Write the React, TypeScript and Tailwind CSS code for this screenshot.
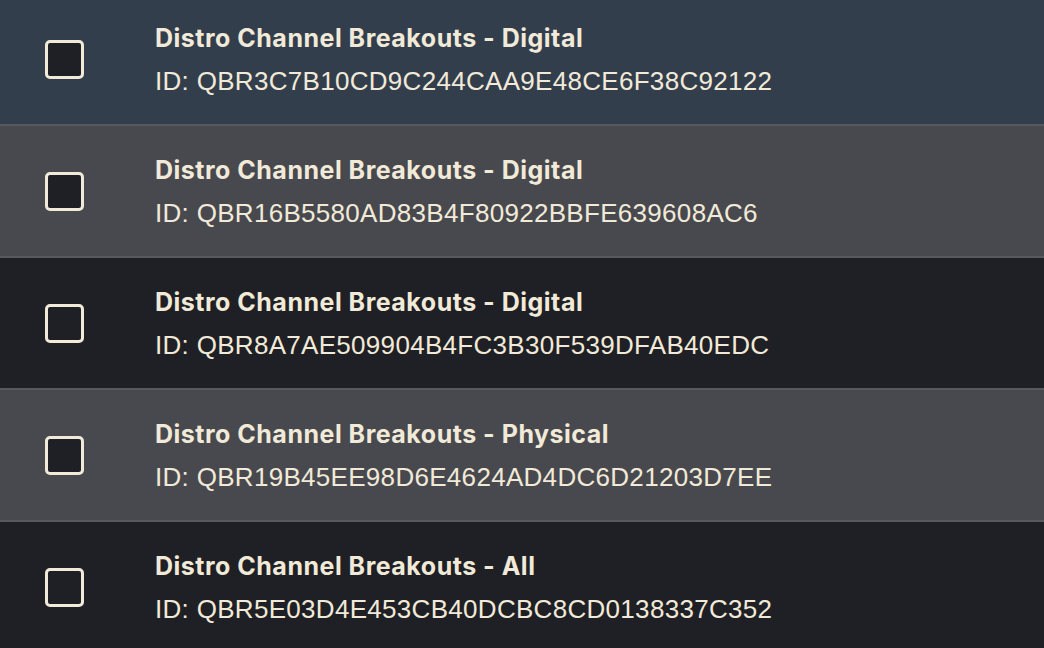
const rows = [
    { title: 'Distro Channel Breakouts - Digital', id: 'QBR3C7B10CD9C244CAA9E48CE6F38C92122', tone: 'selected' },
    { title: 'Distro Channel Breakouts - Digital', id: 'QBR16B5580AD83B4F80922BBFE639608AC6', tone: 'grey' },
    { title: 'Distro Channel Breakouts - Digital', id: 'QBR8A7AE509904B4FC3B30F539DFAB40EDC', tone: 'dark' },
    { title: 'Distro Channel Breakouts - Physical', id: 'QBR19B45EE98D6E4624AD4DC6D21203D7EE', tone: 'grey' },
    { title: 'Distro Channel Breakouts - All', id: 'QBR5E03D4E453CB40DCBC8CD0138337C352', tone: 'dark' },
];

const toneClass: Record<string, string> = {
    selected: 'bg-[#333e4d]',
    grey: 'bg-[#48494e]',
    dark: 'bg-[#1f2025]',
};

function Row({ title, id, tone, last }: { title: string; id: string; tone: string; last: boolean }) {
    return (
        <div className={`${toneClass[tone]} h-[130px] flex items-center ${last ? '' : 'border-b-2 border-[#58595d]'} box-content`}>
            <div className="w-[155px] flex justify-start pl-[45px]">
                <div className="w-[39px] h-[39px] rounded-[5px] border-[3px] border-[#f2ead9] bg-[#1f2025]" />
            </div>
            <div className="flex flex-col gap-[13px] text-[#f2ead9]">
                <div className="font-['Inter'] font-bold text-[25px] leading-[30px] tracking-[0.5px]">{title}</div>
                <div className="font-['Liberation_Sans'] text-[26px] leading-[30px] tracking-[0.3px]">ID: {id}</div>
            </div>
        </div>
    );
}

export default function App() {
    return (
        <div className="w-[1044px] h-[648px] overflow-hidden bg-[#1f2025]">
            <div className="-mt-[6px]">
                {rows.map((r, i) => (
                    <Row key={i} {...r} last={i === rows.length - 1} />
                ))}
            </div>
        </div>
    );
}
